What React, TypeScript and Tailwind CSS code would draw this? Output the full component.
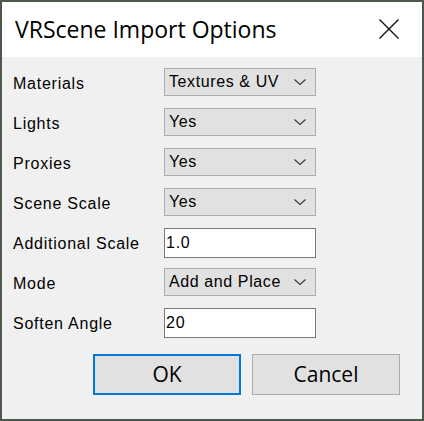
import React from "react";

const Chevron = () => (
  <svg width="14" height="8" viewBox="0 0 14 8" className="shrink-0">
    <polyline points="1.5,1.5 7,6.5 12.5,1.5" fill="none" stroke="#3a3a3a" strokeWidth="1.1" />
  </svg>
);

const Select = ({ value }: { value: string }) => (
  <div className="mt-[6px] flex h-[28px] w-[152px] items-center overflow-hidden border border-[#adadad] bg-[#e1e1e1] pl-[4px] pr-[8px]">
    <span className="w-[112px] overflow-hidden whitespace-nowrap text-[16px] leading-none tracking-[0.6px] text-black">{value}</span>
    <span className="flex-1" />
    <Chevron />
  </div>
);

const Input = ({ value }: { value: string }) => (
  <div className="mt-[6px] flex h-[30px] w-[152px] items-center border border-[#7a7a7a] bg-white pl-[1px]">
    <span className="text-[16px] leading-none tracking-[0.75px] text-black">{value}</span>
  </div>
);

const rows: { label: string; kind: "select" | "input"; value: string }[] = [
  { label: "Materials", kind: "select", value: "Textures & UV" },
  { label: "Lights", kind: "select", value: "Yes" },
  { label: "Proxies", kind: "select", value: "Yes" },
  { label: "Scene Scale", kind: "select", value: "Yes" },
  { label: "Additional Scale", kind: "input", value: "1.0" },
  { label: "Mode", kind: "select", value: "Add and Place" },
  { label: "Soften Angle", kind: "input", value: "20" },
];

export default function App() {
  return (
    <div
      className="flex h-[421px] w-[424px] flex-col border-2 border-[#4c5a4c] bg-[#f0f0f0]"
      style={{ fontFamily: '"Liberation Sans", Arial, sans-serif' }}
    >
      <div className="flex h-[55px] shrink-0 items-center justify-between bg-white pl-[13px] pr-[23px]">
        <span
          className="text-[23px] text-black"
          style={{ fontFamily: '"Open Sans", "Noto Sans", sans-serif' }}
        >
          VRScene Import Options
        </span>
        <svg width="20" height="20" viewBox="0 0 20 20" className="-mt-[2px]">
          <path d="M0.5 0.5 L19.5 19.5 M19.5 0.5 L0.5 19.5" stroke="#111" strokeWidth="1.4" fill="none" />
        </svg>
      </div>
      <div className="flex flex-1 flex-col pt-[5px]">
        {rows.map((r) => (
          <div key={r.label} className="flex h-[40px] items-start pl-[11px]">
            <div className="flex h-[40px] w-[151px] items-center pt-[4px] text-[16px] leading-none tracking-[0.75px] text-black">
              {r.label}
            </div>
            {r.kind === "select" ? <Select value={r.value} /> : <Input value={r.value} />}
          </div>
        ))}
        <div
          className="mt-[12px] flex justify-end gap-[11px] pr-[22px]"
          style={{ fontFamily: '"Open Sans", "Noto Sans", sans-serif' }}
        >
          <button className="flex h-[41px] w-[148px] items-center justify-center border-2 border-[#0078d7] bg-[#e1e1e1] text-[21px] text-black">
            OK
          </button>
          <button className="flex h-[41px] w-[148px] items-center justify-center border border-[#adadad] bg-[#e1e1e1] text-[21px] text-black">
            Cancel
          </button>
        </div>
      </div>
    </div>
  );
}
